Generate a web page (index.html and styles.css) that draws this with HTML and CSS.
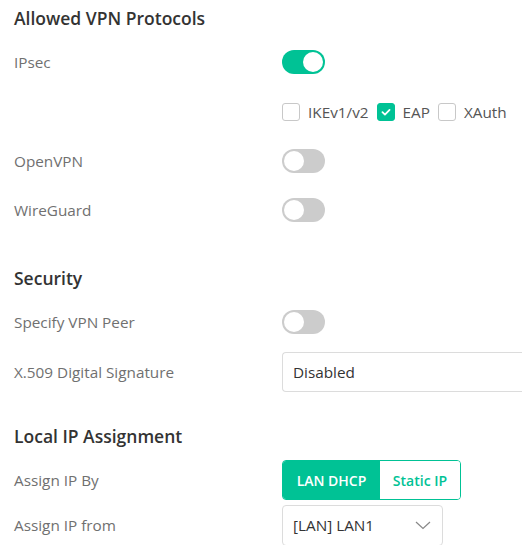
FILE: index.html
```html
<!DOCTYPE html>
<html>
<head>
<meta charset="utf-8">
<link rel="stylesheet" href="styles.css">
</head>
<body>
<div class="page">
  <h2 class="heading h-first">Allowed VPN Protocols</h2>
  <div class="row r-ipsec">
    <div class="label">IPsec</div>
    <div class="control"><span class="toggle on"><span class="knob"></span></span></div>
  </div>
  <div class="row r-checks">
    <div class="label"></div>
    <div class="control checks">
      <span class="cb"></span><span class="cb-text">IKEv1/v2</span>
      <span class="cb checked"><svg viewBox="0 0 18 18" width="18" height="18"><path d="M5 9.2 L7.8 12 L13 6.6" fill="none" stroke="#fff" stroke-width="2" stroke-linecap="round" stroke-linejoin="round"/></svg></span><span class="cb-text">EAP</span>
      <span class="cb"></span><span class="cb-text">XAuth</span>
    </div>
  </div>
  <div class="row r-open">
    <div class="label">OpenVPN</div>
    <div class="control"><span class="toggle"><span class="knob"></span></span></div>
  </div>
  <div class="row r-wg">
    <div class="label">WireGuard</div>
    <div class="control"><span class="toggle"><span class="knob"></span></span></div>
  </div>

  <h2 class="heading h-sec">Security</h2>
  <div class="row r-peer">
    <div class="label">Specify VPN Peer</div>
    <div class="control"><span class="toggle"><span class="knob"></span></span></div>
  </div>
  <div class="row r-x509">
    <div class="label">X.509 Digital Signature</div>
    <div class="control grow"><div class="input">Disabled</div></div>
  </div>

  <h2 class="heading h-local">Local IP Assignment</h2>
  <div class="row r-by">
    <div class="label">Assign IP By</div>
    <div class="control">
      <div class="segmented">
        <span class="seg active">LAN DHCP</span><span class="seg">Static IP</span>
      </div>
    </div>
  </div>
  <div class="row r-from">
    <div class="label">Assign IP from</div>
    <div class="control">
      <div class="select"><span>[LAN] LAN1</span>
        <svg class="chev" width="16" height="9" viewBox="0 0 16 9"><path d="M1 1 L8 7.5 L15 1" fill="none" stroke="#888" stroke-width="1.2"/></svg>
      </div>
    </div>
  </div>
</div>
</body>
</html>
```

FILE: styles.css
```css
html, body {
  margin: 0;
  padding: 0;
  overflow: hidden;
  background: #fff;
}
body {
  font-family: "Open Sans", "Liberation Sans", sans-serif;
  width: 522px;
  height: 545px;
}
.page {
  padding: 6px 0 0 14px;
  display: flex;
  flex-direction: column;
}
.heading {
  margin: 0;
  font-size: 17.5px;
  font-weight: 600;
  color: #333;
  line-height: 24px;
  height: 24px;
}
.h-sec { margin-top: 36px; }
.h-local { margin-top: 32px; }
.row {
  display: flex;
  align-items: center;
  height: 40px;
}
.r-ipsec { margin-top: 12px; }
.r-checks { margin-top: 10px; }
.r-open { margin-top: 9px; }
.r-wg { margin-top: 9px; }
.r-peer { margin-top: 12px; }
.r-x509 { margin-top: 10px; }
.r-by { margin-top: 12px; }
.r-from { margin-top: 5px; }
.label {
  width: 268px;
  flex: none;
  font-size: 15.3px;
  color: #707070;
}
.control {
  display: flex;
  align-items: center;
}
.control.grow { flex: 1; }
.toggle {
  position: relative;
  width: 43px;
  height: 24px;
  border-radius: 12px;
  background: #cccccc;
  display: inline-block;
}
.toggle .knob {
  position: absolute;
  top: 2px;
  left: 2px;
  width: 20px;
  height: 20px;
  border-radius: 50%;
  background: #fff;
}
.toggle.on { background: #00c295; }
.toggle.on .knob { left: 21px; }
.checks { font-size: 15.3px; color: #555; }
.cb {
  width: 16px;
  height: 16px;
  border: 1px solid #c8c8c8;
  border-radius: 3px;
  box-sizing: content-box;
  display: inline-flex;
  align-items: center;
  justify-content: center;
  background: #fff;
}
.cb.checked {
  background: #00c295;
  border-color: #00c295;
}
.cb.checked svg { width: 16px; height: 16px; }
.cb-text {
  margin-left: 8px;
  margin-right: 8px;
}
.input {
  box-sizing: border-box;
  flex: 1;
  height: 40px;
  border: 1px solid #dcdcdc;
  border-right: none;
  border-radius: 4px 0 0 4px;
  padding: 0 10px;
  display: flex;
  align-items: center;
  font-size: 15.3px;
  color: #333;
}
.segmented {
  display: flex;
  height: 40px;
  box-sizing: border-box;
  border: 1px solid #00c295;
  border-radius: 4px;
  overflow: hidden;
}
.seg {
  display: flex;
  align-items: center;
  justify-content: center;
  font-size: 14px;
  font-weight: 600;
  color: #00c295;
  background: #fff;
  width: 80px;
}
.seg.active {
  background: #00c295;
  color: #fff;
  width: 97px;
}
.select {
  box-sizing: border-box;
  width: 161px;
  height: 41px;
  border: 1px solid #dcdcdc;
  border-radius: 4px;
  padding: 0 10px;
  display: flex;
  align-items: center;
  justify-content: space-between;
  font-size: 15.3px;
  color: #333;
}
.chev { margin-right: 1px; }
```
